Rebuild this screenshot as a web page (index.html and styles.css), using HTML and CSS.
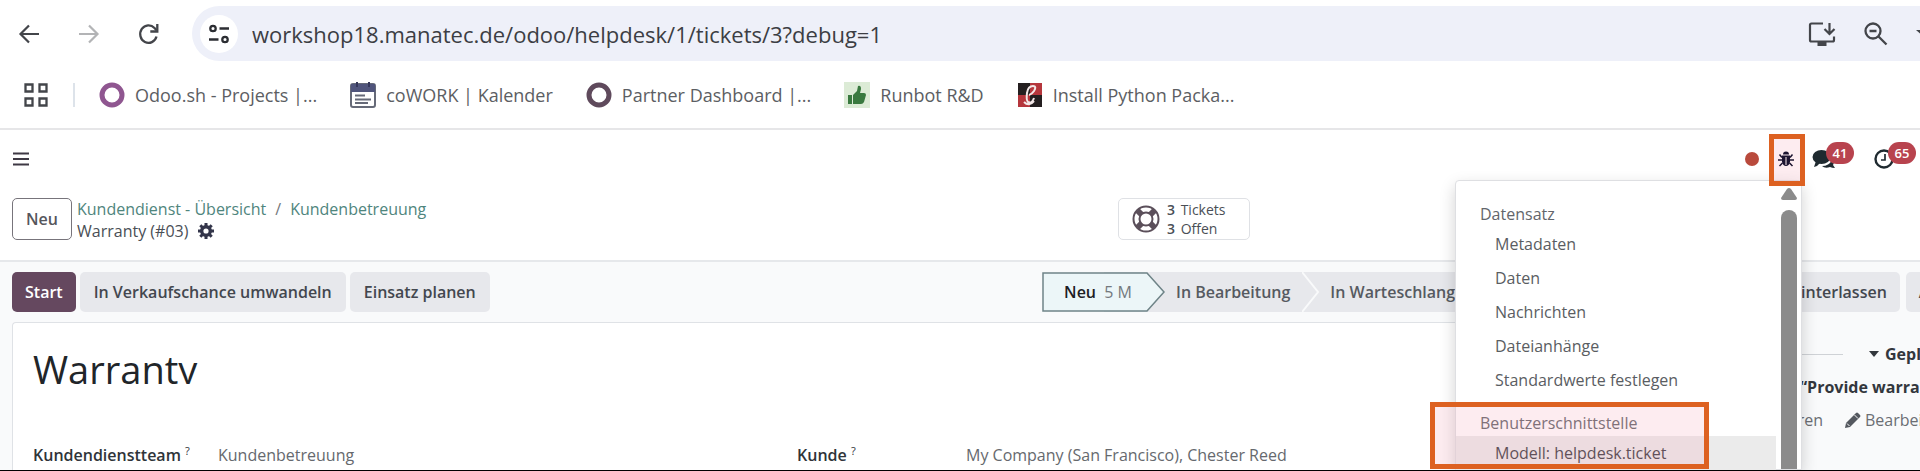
FILE: index.html
```html
<!DOCTYPE html>
<html lang="de">
<head>
  <meta charset="UTF-8">
  <title>Warranty (#03)</title>
  <link rel="stylesheet" href="styles.css">
</head>
<body>

  <!-- Browser toolbar -->
  <header class="browser">
    <div class="toolbar">
      <button class="tool" aria-label="Zurück">
        <svg width="24" height="24" viewBox="0 0 24 24"><path d="M22 12H4M12 3.500L3.500 12l8.500 8.500" fill="none" stroke="#43454a" stroke-width="2.200"/></svg>
      </button>
      <button class="tool" aria-label="Vorwärts">
        <svg width="24" height="24" viewBox="0 0 24 24"><path d="M2 12h18M12 3.500l8.500 8.500-8.500 8.500" fill="none" stroke="#b3b4b6" stroke-width="2.200"/></svg>
      </button>
      <button class="tool" aria-label="Neu laden">
        <svg width="24" height="24" viewBox="0 0 24 24"><path d="M19.500 14.500A8.300 8.800 0 1 1 17.500 6l2 2.200" fill="none" stroke="#43454a" stroke-width="2.300"/><path d="M20.300 2v7.500h-7" fill="none" stroke="#43454a" stroke-width="2.300"/></svg>
      </button>
      <div class="omnibox">
        <button class="site-info" aria-label="Website-Informationen">
          <svg width="24" height="24" viewBox="0 0 24 24" fill="none" stroke="#2c2e33" stroke-width="2.300"><circle cx="6" cy="6.500" r="2.700"/><path d="M12.500 6.500H22M2 17.500h9.500"/><circle cx="18" cy="17.500" r="2.700"/></svg>
        </button>
        <input class="url" type="text" aria-label="Adresse" value="workshop18.manatec.de/odoo/helpdesk/1/tickets/3?debug=1">
        <button class="tool" aria-label="App installieren">
          <svg width="28" height="24" viewBox="0 0 28 24" fill="none" stroke="#43454a" stroke-width="2.200"><path d="M15 1.500H3.500Q2 1.500 2 3v15q0 1.500 1.500 1.500h21q1.500 0 1.500-1.500v-3.500M21.500 1v10M16.500 7l5 5 5-5"/><path d="M9.500 22h9" stroke-width="4"/></svg>
        </button>
        <button class="tool" aria-label="Zoom">
          <svg width="26" height="26" viewBox="0 0 26 26" fill="none" stroke="#43454a" stroke-width="2.300"><circle cx="10" cy="10" r="7.500"/><path d="M15.500 15.500l8 8M6.500 10h7"/></svg>
        </button>
        <svg class="star" width="24" height="24" viewBox="0 0 24 24"><path d="M12 0l3 8h9l-7 6 2.500 9-7.500-5-7.500 5L7 14 0 8h9z" fill="#43454a"/></svg>
      </div>
    </div>

    <nav class="bookmarks">
      <button class="tool apps" aria-label="Apps">
        <svg width="24" height="24" viewBox="0 0 24 24" fill="none" stroke="#43454a" stroke-width="2.300"><path d="M1.500 1.500h7v7h-7zM15.500 1.500h7v7h-7zM1.500 15.500h7v7h-7zM15.500 15.500h7v7h-7z"/></svg>
      </button>
      <a href="#" class="bookmark">
        <svg width="26" height="26" viewBox="0 0 26 26"><circle cx="13" cy="13" r="10" fill="none" stroke="#8f5690" stroke-width="5"/></svg>
        Odoo.sh - Projects |...
      </a>
      <a href="#" class="bookmark">
        <svg width="26" height="26" viewBox="0 0 26 26"><rect x="1" y="2" width="24" height="23" rx="2" fill="#fff" stroke="#666a78" stroke-width="2"/><path d="M1 2h24v8H1z" fill="#50557c"/><path d="M7 0v5M19 0v5" stroke="#34375a" stroke-width="2"/><path d="M5 13.500h10M5 17.500h16M5 21h13" stroke="#666a78" stroke-width="2"/></svg>
        coWORK | Kalender
      </a>
      <a href="#" class="bookmark">
        <svg width="26" height="26" viewBox="0 0 26 26"><circle cx="13" cy="13" r="10" fill="none" stroke="#5f4a5c" stroke-width="5"/></svg>
        Partner Dashboard |...
      </a>
      <a href="#" class="bookmark">
        <svg width="26" height="26" viewBox="0 0 26 26"><path d="M0 0h26v26H0z" fill="#dcebd6"/><path d="M4 13h4v9H4zM9 13l4-4 1-5q3-1 3 3l-1 4h4q2 0 2 2l-2 7q-1 2-3 2H9z" fill="#39793f"/></svg>
        Runbot R&amp;D
      </a>
      <a href="#" class="bookmark">
        <svg width="26" height="26" viewBox="0 0 26 26"><path d="M1 1h24v24H1z" fill="#241f20"/><path d="M13 1h12v12H13zM1 13h12v12H1z" fill="#b5363c"/><path d="M17 9q3-5-1-5-5 0-6 7t1 9q4 2 6-4M7 20q5 5 10-1M12 13q3-1 5-4" fill="none" stroke="#f4e8e8" stroke-width="2"/></svg>
        Install Python Packa...
      </a>
    </nav>
  </header>

  <!-- Odoo navbar -->
  <nav class="navbar">
    <button class="tool" aria-label="Menü">
      <svg width="16" height="14" viewBox="0 0 16 14"><path d="M0 1.500h16M0 7h16M0 12.500h16" stroke="#3e3944" stroke-width="2.200"/></svg>
    </button>
    <div class="systray">
      <span class="record-dot"></span>
      <button class="tool debug" aria-label="Debug">
        <svg width="16" height="16" viewBox="0 0 16 16"><path d="M5 3.500a3 3 0 0 1 6 0z" fill="#1c1430"/><path d="M4 4.500h8V11q-1 4-4 4t-4-4z" fill="#1c1430"/><path d="M4 6.500L1.500 3.500M12 6.500l2.500-3M4 9H0M12 9h4M4.500 12l-3 3M11.500 12l3 3" stroke="#1c1430" stroke-width="1.500"/><path d="M8 6v8" stroke="#fdecef"/></svg>
      </button>
      <button class="tool chat" aria-label="Nachrichten">
        <svg width="24" height="20" viewBox="0 0 24 20" fill="#1f2a30"><ellipse cx="9.500" cy="8" rx="9" ry="7"/><path d="M4 12l-2 6q4-1 6-4zM10 17q7 0 10-6 3 2 1 5l2 3q-3 0-5-1-5 2-8-1z"/></svg>
        <span class="badge">41</span>
      </button>
      <button class="tool clock" aria-label="Aktivitäten">
        <svg width="20" height="20" viewBox="0 0 20 20" fill="none" stroke="#1f2a30"><circle cx="10" cy="10" r="8.500" stroke-width="2.400"/><path d="M11 5v6H7" stroke-width="1.700"/></svg>
        <span class="badge">65</span>
      </button>
    </div>

    <!-- Debug menu -->
    <div class="debug-menu">
      <div class="menu-list">
        <h2 class="menu-header">Datensatz</h2>
        <a href="#" class="menu-item">Metadaten</a>
        <a href="#" class="menu-item">Daten</a>
        <a href="#" class="menu-item">Nachrichten</a>
        <a href="#" class="menu-item">Dateianhänge</a>
        <a href="#" class="menu-item">Standardwerte festlegen</a>
        <h2 class="menu-header second">Benutzerschnittstelle</h2>
        <a href="#" class="menu-item active">Modell: helpdesk.ticket</a>
      </div>
      <div class="scrollbar">
        <svg width="16" height="12" viewBox="0 0 16 12"><path d="M8 0q1 0 2 1l6 9q0 2-2 2H2q-2 0-2-2l6-9q1-1 2-1z" fill="#8b8b8b"/></svg>
        <div class="thumb"></div>
      </div>
    </div>
    <div class="mark mark-bug"></div>
    <div class="mark mark-model"></div>
  </nav>

  <!-- Control panel -->
  <section class="control-panel">
    <button class="btn btn-new">Neu</button>
    <div class="crumbs">
      <div class="crumb-path"><a href="#">Kundendienst - Übersicht</a><span class="slash">/</span><a href="#">Kundenbetreuung</a></div>
      <div class="crumb-current">Warranty (#03)
        <svg width="16" height="16" viewBox="0 0 16 16"><circle cx="8" cy="8" r="4.300" fill="none" stroke="#33354a" stroke-width="3.400"/><path d="M8 0v3M8 13v3M0 8h3M13 8h3M2.300 2.300l2.200 2.200M11.500 11.500l2.200 2.200M2.300 13.700l2.200-2.200M11.500 4.500l2.200-2.200" stroke="#33354a" stroke-width="3"/></svg>
      </div>
    </div>
    <button class="stat">
      <svg width="28" height="28" viewBox="0 0 28 28" fill="none" stroke="#5b4f5a"><circle cx="14" cy="14" r="12.500" stroke-width="2"/><circle cx="14" cy="14" r="6.500" stroke-width="2"/><path d="M5.500 5.500l4 4M18.500 18.500l4 4M5.500 22.500l4-4M18.500 9.500l4-4" stroke-width="6"/></svg>
      <span><b>3</b> Tickets<br><b>3</b> Offen</span>
    </button>
  </section>

  <div class="content">
    <main class="form">
      <div class="statusbar">
        <button class="btn btn-primary">Start</button>
        <button class="btn">In Verkaufschance umwandeln</button>
        <button class="btn">Einsatz planen</button>
        <div class="stages">
          <button class="stage current">
            <svg class="stage-shape" width="124" height="40" viewBox="0 0 124 40"><path d="M1 1h104l17 19-17 19H1z" fill="#ecf6f8" stroke="#6f8488" stroke-width="1.500"/></svg>
            <span class="stage-text">Neu <small>5 M</small></span>
          </button>
          <button class="stage">In Bearbeitung</button>
          <svg class="chevron" width="18" height="40" viewBox="0 0 18 40"><path d="M0 0l16 20L0 40" fill="none" stroke="#f9fafb" stroke-width="2"/></svg>
          <button class="stage waiting">In Warteschlange</button>
        </div>
      </div>

      <!-- Ticket sheet -->
      <div class="sheet">
        <textarea class="title" aria-label="Titel" rows="1">Warranty</textarea>
        <div class="fields">
          <div class="field team">
            <label for="team">Kundendienstteam <sup>?</sup></label>
            <input id="team" type="text" value="Kundenbetreuung">
          </div>
          <div class="field customer">
            <label for="customer">Kunde <sup>?</sup></label>
            <input id="customer" type="text" value="My Company (San Francisco), Chester Reed">
          </div>
        </div>
      </div>
    </main>

    <!-- Chatter -->
    <aside class="chatter">
      <div class="chatter-buttons">
        <button class="btn">Nachricht hinterlassen</button>
        <button class="btn">Aktivität</button>
      </div>
      <div class="planned">
        <hr>
        <svg width="10" height="6" viewBox="0 0 10 6"><path d="M0 0h10L5 6z" fill="#33373d"/></svg>
        <b>Geplante Aktivitäten</b>
      </div>
      <div class="activity"><b>“Provide warranty”</b></div>
      <div class="activity-links">
        <a href="#" class="done">Markieren</a>
        <a href="#" class="edit"><svg width="16" height="16" viewBox="0 0 16 16"><path d="M0 16l1-5L11 1q1-1 2 0l2 2q1 1 0 2L5 15z" fill="#54585f"/><path d="M9.500 3l3.500 3.500M2 11.500L4.500 14" stroke="#f9fafb"/></svg>Bearbeiten</a>
      </div>
    </aside>
  </div>

</body>
</html>
```
FILE: styles.css
```css
* {
  box-sizing: border-box;
}

body {
  margin: 0;
  height: 100vh;
  display: flex;
  flex-direction: column;
  overflow: hidden;
  background: #fff;
  border-bottom: 1px solid #000;
  color: #4a4f56;
  font-family: "Open Sans", "Noto Sans", sans-serif;
  font-size: 16px;
  line-height: 22px;
  white-space: nowrap;
}

button,
input,
textarea {
  font: inherit;
  color: inherit;
  border: 0;
  padding: 0;
  background: none;
}

a {
  color: inherit;
  text-decoration: none;
}

svg {
  display: block;
  flex: none;
}

.tool {
  display: flex;
  flex: none;
}

/* Browser */
.browser {
  height: 130px;
  flex: none;
  border-bottom: 2px solid #e6e6e8;
}

.toolbar {
  display: flex;
  align-items: center;
  gap: 36px;
  padding: 6px 0 0 17px;
}

.omnibox {
  flex: 1;
  min-width: 0;
  height: 55px;
  display: flex;
  align-items: center;
  padding-left: 8px;
  margin-left: -5px;
  background: #eef0f9;
  border-radius: 28px 0 0 28px;
  overflow: hidden;
}

.site-info {
  display: flex;
  align-items: center;
  justify-content: center;
  width: 38px;
  height: 38px;
  border-radius: 50%;
  background: #fff;
}

.url {
  flex: 1;
  margin-left: 14px;
  font-size: 22px;
  line-height: 30px;
  color: #3c3e44;
}

.omnibox .tool {
  margin-right: 27px;
}

.omnibox .star {
  margin-right: -20px;
}

.bookmarks {
  display: flex;
  align-items: center;
  gap: 33px;
  padding: 20px 0 0 24px;
  font-size: 18px;
  line-height: 28px;
  color: #5c5e63;
}

.apps {
  padding-right: 25px;
  border-right: 2px solid #dde3ea;
  margin-right: -9px;
}

.bookmark {
  display: flex;
  align-items: center;
  gap: 10px;
}

/* Navbar */
.navbar {
  position: relative;
  flex: none;
  height: 58px;
  display: flex;
  align-items: center;
  justify-content: space-between;
  padding-left: 13px;
}

.systray {
  display: flex;
  align-items: center;
  height: 58px;
}

.record-dot {
  width: 14px;
  height: 14px;
  margin-right: 19px;
  border-radius: 50%;
  background: #b94a3c;
}

.debug {
  position: relative;
  z-index: 4;
  margin-right: 18px;
}

.chat {
  position: relative;
  width: 62px;
}

.clock {
  position: relative;
  width: 46px;
}

.badge {
  position: absolute;
  left: 14px;
  top: -7px;
  width: 28px;
  border-radius: 11px;
  background: #b8434e;
  color: #fff;
  font-size: 13px;
  font-weight: 600;
  text-align: center;
}

/* Debug menu */
.debug-menu {
  position: absolute;
  z-index: 2;
  top: 50px;
  right: 118px;
  width: 347px;
  height: 290px;
  display: flex;
  justify-content: space-between;
  background: #fff;
  border: 1px solid #dedfe2;
  border-radius: 4px 4px 0 0;
  box-shadow: 0 6px 16px rgba(0, 0, 0, 0.18);
}

.menu-list {
  width: 320px;
  padding-top: 20px;
}

.menu-header {
  margin: 0;
  padding-left: 24px;
  font-size: 16px;
  line-height: 26px;
  font-weight: 500;
  color: #63666b;
}

.menu-header.second {
  margin-top: 13px;
}

.menu-item {
  display: block;
  padding-left: 39px;
  line-height: 34px;
  color: #5a5d62;
}

.menu-item.active {
  background: #ebebeb;
  color: #3c3e44;
  font-weight: 500;
}

.scrollbar {
  display: flex;
  flex-direction: column;
  gap: 10px;
  padding: 7px 4px 0 0;
}

.thumb {
  flex: 1;
  width: 16px;
  border-radius: 8px 8px 0 0;
  background: #8b8b8b;
}

/* Orange frames */
.mark {
  position: absolute;
  z-index: 3;
  border: 5px solid #dd6121;
  background: rgba(245, 160, 180, 0.2);
}

.mark-bug {
  top: 4px;
  right: 115px;
  width: 36px;
  height: 52px;
}

.mark-model {
  top: 272px;
  right: 211px;
  width: 279px;
  height: 67px;
}

/* Control panel */
.control-panel {
  flex: none;
  height: 74px;
  display: flex;
  align-items: flex-start;
  padding: 10px 12px 0;
  border-bottom: 2px solid #e6e8eb;
}

.btn {
  flex: none;
  height: 40px;
  padding: 0 14px;
  border-radius: 5px;
  background: #e7e8ec;
  color: #43474f;
  font-weight: 600;
}

.btn-new {
  width: 60px;
  height: 42px;
  padding: 0;
  border: 1px solid #77747b;
  background: #fff;
  color: #55565c;
}

.crumbs {
  margin-left: 5px;
}

.crumb-path {
  color: #4f857d;
  font-weight: 500;
}

.slash {
  margin: 0 9px;
  color: #74777c;
}

.crumb-current {
  display: flex;
  align-items: center;
  gap: 10px;
}

.stat {
  display: flex;
  align-items: center;
  gap: 7px;
  width: 132px;
  height: 42px;
  margin-left: auto;
  margin-right: 658px;
  padding-left: 13px;
  border: 1px solid #dfe1e5;
  border-radius: 5px;
  font-size: 14px;
  line-height: 19px;
  text-align: left;
}

.stat b {
  font-weight: 600;
  margin-right: 2px;
}

/* Form */
.content {
  flex: 1;
  min-height: 0;
  display: flex;
  background: #f9fafb;
}

.form {
  flex: 1;
  min-width: 0;
  display: flex;
  flex-direction: column;
  overflow: hidden;
}

.statusbar {
  flex: none;
  display: flex;
  gap: 4px;
  padding: 10px 0 10px 12px;
}

.btn-primary {
  padding: 0 13px;
  background: #65485f;
  color: #fff;
}

.stages {
  display: flex;
  margin-left: auto;
  width: 430px;
  overflow: hidden;
  background: #e7e8ec;
}

.stage {
  flex: none;
  padding-left: 10px;
  color: #565a61;
  font-weight: 600;
}

.current {
  position: relative;
  width: 124px;
  padding: 0;
  background: linear-gradient(90deg, #f9fafb 50%, #e7e8ec 50%);
}

.stage-shape {
  position: absolute;
  top: 0;
  left: 0;
}

.stage-text {
  position: relative;
  margin-right: 12px;
  color: #1d2024;
}

.stage-text small {
  margin-left: 4px;
  font-size: 16px;
  font-weight: 400;
  color: #73797e;
}

.chevron {
  margin-left: 12px;
}

.sheet {
  flex: 1;
  margin-left: 12px;
  padding: 20px 0 0 20px;
  background: #fff;
  border: 1px solid #dfe2e6;
  border-right: 0;
  border-bottom: 0;
  border-radius: 4px 0 0 0;
}

.title {
  display: block;
  width: 100%;
  height: 41px;
  resize: none;
  overflow: hidden;
  font-size: 38px;
  line-height: 52px;
  color: #212529;
}

.fields {
  display: flex;
  margin-top: 60px;
}

.field {
  display: flex;
  align-items: center;
}

.team {
  width: 764px;
}

.customer {
  flex: 1;
}

.field label {
  width: 185px;
  font-weight: 600;
  color: #2f3439;
}

.customer label {
  width: 169px;
}

.field sup {
  font-size: 11px;
  line-height: 11px;
  font-weight: 400;
}

.field input {
  flex: 1;
  color: #66696e;
}

/* Chatter */
.chatter {
  flex: none;
  width: 448px;
  padding-top: 10px;
  overflow: hidden;
}

.chatter-buttons {
  display: flex;
  gap: 6px;
  padding-left: 226px;
}

.chatter-buttons .btn {
  padding: 0 13px;
}

.planned {
  display: flex;
  align-items: center;
  gap: 6px;
  margin-top: 31px;
  color: #33373d;
}

.planned hr {
  flex: none;
  width: 371px;
  margin: 0 20px 0 0;
  border: 0;
  border-top: 1px solid #cfd2d6;
}

.activity {
  padding-left: 328px;
  margin-top: 11px;
  color: #33373d;
}

.activity-links {
  display: flex;
  gap: 22px;
  margin-top: 11px;
  color: #6b6e74;
}

.done {
  flex: none;
  width: 351px;
  text-align: right;
}

.edit {
  flex: none;
  display: flex;
  align-items: center;
  gap: 4px;
}
```
